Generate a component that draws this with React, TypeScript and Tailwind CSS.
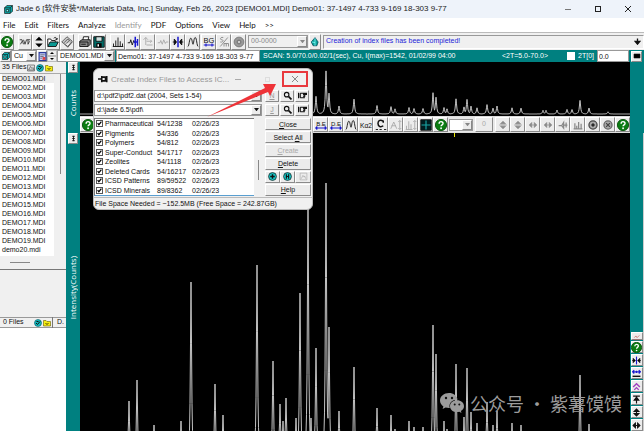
import type { ReactNode } from "react";
import { clsx } from "clsx";

const files = [
  ...Array.from({ length: 19 }, (_, i) => `DEMO${String(i + 1).padStart(2, "0")}.MDI`),
  "demo20.mdi",
  "DEMO20.MDI",
];

const menus = ["File", "Edit", "Filters", "Analyze", "Identify", "PDF", "Options", "View", "Help", ">>"];

const subfiles = [
  ["Pharmaceutical", "54/1238"],
  ["Pigments", "54/336"],
  ["Polymers", "54/812"],
  ["Super-Conduct", "54/1717"],
  ["Zeolites", "54/1118"],
  ["Deleted Cards", "54/16217"],
  ["ICSD Patterns", "89/59522"],
  ["ICSD Minerals", "89/8362"],
];

// [position, height] of each reflection
const peaks = [
  [49, 62], [57, 83], [74, 38], [101, 42], [111, 181], [135, 79], [143, 48], [177, 198],
  [193, 102], [200, 59], [203, 42], [206, 65], [216, 45], [220, 170], [228, 270], [231, 45],
  [236, 115], [246, 280], [249, 136], [259, 52], [274, 96], [297, 55], [311, 48], [315, 34],
  [329, 42], [334, 36], [343, 36], [353, 138], [356, 109], [364, 42], [367, 34], [376, 99],
  [384, 46], [387, 95], [391, 51], [397, 40], [407, 61], [413, 38], [417, 52], [432, 40],
  [441, 38], [463, 24], [466, 24], [477, 25], [487, 30], [492, 29], [500, 88], [509, 39], [528, 14],
];

function trace(height: number, base: number, scale: number) {
  const points: string[] = [];
  for (let x = 0; x <= 550; x += 0.5) {
    const h = Math.max(...peaks.map(([px, ph]) => ph / (1 + ((x - px) / 0.7) ** 2)));
    points.push(`${x},${Math.min(height + 5, base - h * scale).toFixed(1)}`);
  }
  return points.join(" ");
}

const glyphs: Record<string, ReactNode> = {
  help: (
    <>
      <circle cx="8" cy="8" r="7.5" fill="#0b7d12" stroke="#065009" />
      <path d="M5.5 6.2c0-3.6 5.2-3.4 5.2-.3 0 1.900-2.600 1.900-2.600 3.800" stroke="#fff" strokeWidth="1.900" />
      <circle cx="8.100" cy="12.300" r="1.200" fill="#fff" stroke="none" />
    </>
  ),
  settings: <path d="M1 5h3l2 6M2 11l2-4M6 5l2 6 2-6M10 5h5M12 5v6M14 7l-2 4" stroke="#333" />,
  updown: <path d="M8 1l5 5H3zM8 15l5-5H3z" fill="#000" stroke="none" />,
  open: (
    <>
      <path d="M1 13V4h4l1 2h5v2" fill="#fff" />
      <path d="M1 14l3-6h11l-3 6z" fill="#0a9a94" />
      <path d="M9 3c2-2 4-1 4 2m-2-1l2 1 1-2" />
    </>
  ),
  paper: <path d="M1 8l7-7 7 6-6 7zM4 9l5-5 3 3M5 11l4 4 6-7M7 10l4-4" fill="#ccc" stroke="#555" />,
  print: (
    <>
      <path d="M5 6l1-5h7l-1 5" fill="#fff" />
      <path d="M1 7l3-2h11v6l-3 3H1z" fill="#888" />
      <path d="M1 8h11v6M3 11h6" />
    </>
  ),
  save: (
    <>
      <path d="M1 1h14v14H1z" fill="#006b66" />
      <path d="M4 1h8v6H4z" fill="#cfe0df" />
      <path d="M5 10h6v5H5z" fill="#000" />
      <path d="M6 11h2v3H6z" fill="#fff" stroke="none" />
    </>
  ),
  bars: <path d="M1 14h14M2 14v-4M5 14V6M8 14V2M11 14V7M14 14v-4" />,
  cut: (
    <>
      <path d="M1 9h3l1-4 2 7 2-6 1 3" />
      <path d="M11 1v14M14 4v9M9 8h6" stroke="#1818d0" strokeWidth="2" />
    </>
  ),
  shift: <path d="M5 2v10M2 5l3-3 3 3M6 7h7M11 5l2 2-2 2M6 12h8" stroke="#aaa" />,
  wave: <path d="M1 9h3l1-3 2 5 2-6 2 5 1-2h3" stroke="#aaa" />,
  split: (
    <>
      <path d="M8 1v14" stroke="#1818d0" strokeWidth="2" />
      <path d="M1 8h3M15 8h-3M3 4v8l3-4zM13 4v8l-3-4z" fill="#000" />
    </>
  ),
  peaks: <path d="M1 14c2 0 2-11 4-11s2 8 3 8 1-9 3-9 2 12 4 12" />,
  background: (
    <>
      <text x="8" y="9" fontSize="10" textAnchor="middle" fill="#111" stroke="none">BG</text>
      <path d="M1 12h14M4 10v4M12 10v4" stroke="#1818d0" strokeWidth="1.500" />
    </>
  ),
  be: (
    <>
      <text x="8" y="9" fontSize="8" textAnchor="middle" fill="#111" stroke="none">B.E</text>
      <path d="M1 12h14M3 10l-2 2 2 2M13 10l2 2-2 2" stroke="#1818d0" strokeWidth="1.500" />
    </>
  ),
  de: (
    <>
      <text x="8" y="9" fontSize="8" textAnchor="middle" fill="#111" stroke="none">D.E</text>
      <path d="M1 12h14M3 10l-2 2 2 2M13 10l2 2-2 2" stroke="#1818d0" strokeWidth="1.500" />
    </>
  ),
  ka: <text x="8" y="12" fontSize="9" textAnchor="middle" fill="#111" stroke="none">Kα2</text>,
  sm: <path d="M7 2C3 1 2 5 5 5s2 4-2 3M13 2L3 14M8 14v-4h6v4M11 10v4" stroke="#888" />,
  disc: (
    <>
      <circle cx="8" cy="8" r="6.500" fill="#999" stroke="#777" />
      <circle cx="8" cy="8" r="2.500" fill="#ccc" stroke="#666" />
    </>
  ),
  gem: (
    <>
      <path d="M8 1l5 7-2 6H5L2 8z" fill="#0aa39a" stroke="#045" />
      <path d="M8 2v12M3 8l5 1" stroke="#8ff" />
    </>
  ),
  curve: (
    <>
      <path d="M11 3C6 0 4 3 4 6s3 6 7 3M11 2v3" strokeWidth="2" />
      <path d="M1 14h3M6 14h3M12 14h3" />
    </>
  ),
  peakHeight: <path d="M1 13l4-9 4 9M2 9h6M13 2v12M11 4l2-2 2 2M11 12l2 2 2-2" stroke="#aaa" />,
  barHeight: <path d="M1 14h9M2 14V9M5 14V3M8 14V7M13 2v12M11 4l2-2 2 2M11 12l2 2 2-2" stroke="#aaa" />,
  grid: (
    <>
      <path d="M1 1h14v14H1z" fill="#001c20" />
      <path d="M8 2v12M2 8h12" stroke="#19a5a5" strokeWidth="1.500" />
    </>
  ),
  greyVertical: <path d="M8 2l4 4H4zM8 14l4-4H4zM2 8h12" fill="#888" stroke="#888" />,
  greyHorizontal: <path d="M2 8l4-4v8zM14 8l-4-4v8zM6 8h4" fill="#888" stroke="#888" />,
  greyPeak: <path d="M1 9h5l3-5v9L6 9M9 8h6M13 4v8" stroke="#888" strokeWidth="2" />,
  greyBars: <path d="M1 14h14M3 14V5M6 14V9M9 14V3M13 14V6" stroke="#888" strokeWidth="2" />,
  ring: (
    <>
      <circle cx="8" cy="8" r="6.500" fill="#aaa" stroke="#444" strokeWidth="2" />
      <circle cx="8" cy="8" r="2" fill="#444" />
    </>
  ),
  cross: (
    <>
      <circle cx="8" cy="8" r="6.500" fill="#aaa" stroke="#666" strokeWidth="2" />
      <path d="M5 5l6 6M11 5l-6 6" stroke="#444" strokeWidth="2" />
    </>
  ),
  cube: (
    <>
      <path d="M1 5l4-4h10v10l-4 4H1z" fill="#0aaeb0" />
      <path d="M1 5h10v10M11 5l4-4" />
      <path d="M4 8h4v4H4z" fill="#8ff" />
    </>
  ),
  folder: <path d="M1 14V3h5l2 2h7v9zM4 9h8M6 11h4" fill="#f5ec12" stroke="#665f00" />,
  teal: (
    <>
      <circle cx="8" cy="8" r="7" fill="#12b9bd" stroke="#056" />
      <path d="M4 8l3 3 5-6M5 5h4" strokeWidth="2" />
    </>
  ),
  image: <path d="M1 2h14v12H1zM3 12l4-7 3 4 2-2 2 5z" fill="#ddd" stroke="#444" />,
  page: (
    <>
      <path d="M2 1h12v14H2z" fill="#c9d2ff" stroke="#2c3c9c" strokeWidth="2" />
      <path d="M4 5h8M4 8h6M4 11h3" stroke="#444" />
      <path d="M8 9h5v5H8z" fill="#d44" stroke="none" />
    </>
  ),
  pin: <path d="M0 8h6M6 3v10M6 5h6v6H6M14 3v10" strokeWidth="2.500" />,
  search: (
    <>
      <circle cx="6.500" cy="6.500" r="4" strokeWidth="2" />
      <path d="M10 10l5 5" strokeWidth="3" />
    </>
  ),
  hand: <path d="M1 3v10M4 4v8M4 4h11v2H9h3v3H9h2v3H4" strokeWidth="2" />,
  plus: (
    <>
      <circle cx="8" cy="8" r="7" fill="#17c4c4" />
      <path d="M8 4v8M4 8h8" strokeWidth="2.500" />
    </>
  ),
  hex: (
    <>
      <circle cx="8" cy="8" r="7" fill="#17c4c4" />
      <path d="M6 4v8M10 4v8M5 8h6" strokeWidth="2" />
    </>
  ),
  imageOff: <path d="M2 2h12v12H2zM4 12l3-6 2 3 1-2 2 5" stroke="#aaa" />,
  arrowDown: <path d="M8 1v9M3 8l5 6 5-6z" fill="#000" strokeWidth="3" />,
  squeeze: (
    <>
      <path d="M8 1v14" stroke="#1818d0" strokeWidth="2" />
      <path d="M0 8h3M16 8h-3M2 4v8l4-4zM14 4v8l-4-4z" fill="#000" />
    </>
  ),
  extent: (
    <>
      <path d="M1 5h14M4 2L1 5l3 3M12 2l3 3-3 3M8 3v4" stroke="#1818d0" strokeWidth="2" />
      <path d="M1 13h14" strokeWidth="2.500" />
    </>
  ),
  chevrons: <path d="M2 9l6-6 6 6M4 14l4-4 4 4" stroke="#a040c0" strokeWidth="2.500" />,
  top: <path d="M2 2h12M8 15V7M4 9l4-5 4 5z" fill="#000" strokeWidth="2" />,
  vertical: <path d="M8 3v10M4 6l4-4 4 4zM4 10l4 4 4-4z" fill="#000" strokeWidth="2" />,
  horizontal: <path d="M3 8h10M6 4L2 8l4 4zM10 4l4 4-4 4z" fill="#000" strokeWidth="2" />,
  scan: <path d="M2 14h12M4 10l3-3 2 3 4-4" stroke="#b55" />,
  dots: <path d="M8 2v12M5 3h6M5 8h6M5 13h6" strokeWidth="2" />,
  screen: <path d="M2 4h12v8H2z" fill="#000" />,
};

function Glyph({ name, className = "size-3" }: { name: string; className?: string }) {
  return (
    <svg viewBox="0 0 16 16" fill="none" stroke="#111" strokeWidth="1.200" className={clsx("shrink-0", className)}>
      {glyphs[name]}
    </svg>
  );
}

const bevel =
  "flex items-center justify-center shrink-0 border border-t-white border-l-white border-r-[#8a8a8a] border-b-[#8a8a8a] bg-[#ececec]";

function IconButton({ name, className, icon }: { name: string; className: string; icon?: string }) {
  return (
    <button aria-label={name} className={clsx(bevel, className)}>
      <Glyph name={name} className={icon} />
    </button>
  );
}

function Combo({ label, value, className, muted }: { label: string; value: string; className: string; muted?: boolean }) {
  return (
    <div className={clsx("flex shrink-0 border border-[#999]", muted ? "bg-[#f0f0f0] text-[#888]" : "bg-white", className)}>
      <select aria-label={label} className="min-w-0 flex-1 appearance-none bg-transparent pl-[2px] outline-none">
        <option>{value}</option>
      </select>
      <span className="flex w-[10px] items-center justify-center border border-t-white border-l-white border-r-[#888] border-b-[#888] bg-[#ececec]">
        <svg viewBox="0 0 6 4" className="w-[5px]" fill="currentColor">
          <path d="M0 0h6L3 4z" />
        </svg>
      </span>
    </div>
  );
}

function TitleBar() {
  return (
    <header className="flex h-[18px] shrink-0 items-center bg-[#eef3fa] pr-[13px] pl-1 font-['Liberation_Sans','Noto_Sans_CJK_SC',sans-serif]">
      <Glyph name="cube" className="size-[9px]" />
      <h1 className="ml-[3px] flex-1 truncate text-[8px] leading-[14px] text-[#222]">
        Jade 6 [软件安装*/Materials Data, Inc.] Sunday, Feb 26, 2023 [DEMO01.MDI] Demo01: 37-1497 4-733 9-169 18-303 9-77
      </h1>
      <div className="flex items-center gap-6">
        <button aria-label="Minimize" className="h-px w-[6px] bg-[#777]" />
        <button aria-label="Maximize" className="size-[6px] border border-[#222]" />
        <button aria-label="Close">
          <svg viewBox="0 0 6 6" className="size-[6px]" stroke="#222">
            <path d="M0 0l6 6M6 0L0 6" />
          </svg>
        </button>
      </div>
    </header>
  );
}

function Toolbar() {
  return (
    <div className="flex h-[18px] shrink-0 items-center border-t border-[#bbb] bg-[#f0f0f0]">
      <IconButton name="help" className="h-4 w-[14px]" />
      <div className="ml-1 flex">
        {["settings", "updown", "open", "paper"].map((n) => (
          <IconButton key={n} name={n} className="h-4 w-[14px]" />
        ))}
      </div>
      <div className="ml-1 flex">
        {["print", "save"].map((n) => (
          <IconButton key={n} name={n} className="h-4 w-[14px]" />
        ))}
      </div>
      <div className="ml-1 flex">
        {["bars", "cut", "shift", "wave", "split", "peaks"].map((n) => (
          <IconButton key={n} name={n} className="h-4 w-[15px]" />
        ))}
      </div>
      <div className="ml-[1px] flex">
        {["background", "sm", "disc"].map((n) => (
          <IconButton key={n} name={n} className="h-4 w-[15px]" />
        ))}
      </div>
      <Combo label="Card number" value="00-0000" className="ml-[2px] h-[13px] w-[60px]" muted />
      <IconButton name="gem" className="ml-px h-4 w-[12px]" icon="size-[10px]" />
      <div className="ml-[2px] flex h-[14px] min-w-0 flex-1 items-center border border-t-[#999] border-l-[#999] border-r-white border-b-white px-[2px]">
        <output className="flex-1 whitespace-nowrap text-[#1d1dd8]">Creation of index files has been completed!</output>
        <Glyph name="arrowDown" className="size-[7px]" />
      </div>
    </div>
  );
}

function ScanBar() {
  return (
    <div className="flex h-3 shrink-0 items-center bg-[#008080]">
      <IconButton name="cube" className="h-3 w-[11px]" icon="size-2" />
      <Combo label="Anode" value="Cu" className="h-3 w-[26px]" />
      <IconButton name="page" className="h-3 w-[10px]" icon="size-[9px]" />
      <div className="flex h-3 w-[10px] flex-col">
        <button aria-label="Next" className="flex flex-1 items-center justify-center border border-[#bbb] bg-[#eee]">
          <svg viewBox="0 0 6 3" className="w-1"><path d="M0 3l3-3 3 3z" /></svg>
        </button>
        <button aria-label="Previous" className="flex flex-1 items-center justify-center border border-[#bbb] bg-[#eee]">
          <svg viewBox="0 0 6 3" className="w-1"><path d="M0 0l3 3 3-3z" /></svg>
        </button>
      </div>
      <Combo label="Pattern" value="DEMO01.MDI" className="h-3 w-[58px]" />
      <input
        aria-label="Title"
        defaultValue="Demo01: 37-1497 4-733 9-169 18-303 9-77"
        className="ml-px h-3 w-[144px] shrink-0 border border-[#999] bg-white px-px"
      />
      <span className="ml-[3px] whitespace-nowrap text-white">SCAN: 5.0/70.0/0.02/1(sec), Cu, I(max)=1542, 01/02/99 04:00</span>
      <span className="ml-auto whitespace-nowrap text-white">&lt;2T=5.0-70.0&gt;</span>
      <label className="ml-[19px] flex items-center gap-[3px] text-white">
        <input type="checkbox" className="size-2 appearance-none bg-white" />
        2T[0]
      </label>
      <input aria-label="Offset" defaultValue="0.0" className="ml-[3px] h-3 w-8 shrink-0 border border-[#999] bg-white px-px" />
      <IconButton name="screen" className="mx-[2px] h-[11px] w-[11px]" icon="size-2" />
    </div>
  );
}

function FilePanel() {
  return (
    <aside className="flex w-[66px] shrink-0 flex-col bg-[#f0f0f0]">
      <div className="flex h-3 shrink-0 items-center gap-px border-b border-[#aaa] pl-[2px]">
        <span className="w-6 whitespace-nowrap">35 Files</span>
        <Glyph name="image" className="size-2" />
        <Glyph name="teal" className="size-2" />
        <Glyph name="folder" className="size-2" />
      </div>
      <div className="flex h-[182px] shrink-0">
        <ul className="w-[54px] overflow-hidden bg-white pl-[2px] leading-[9px]">
          {files.map((f, i) => (
            <li key={i} className={clsx("whitespace-nowrap", i === 0 && "bg-[#eee]")}>{f}</li>
          ))}
        </ul>
        <div className="flex flex-1 justify-center">
          <div className="h-[100px] w-px bg-[#888]" />
        </div>
      </div>
      <div className="flex h-[14px] shrink-0 items-center border-b border-[#777] pl-[10px]">
        <div className="h-px w-5 bg-[#888]" />
      </div>
      <div className="h-[47px] shrink-0" />
      <div className="flex h-[11px] shrink-0 items-center border-y border-[#999]">
        <span className="w-8 pl-[3px] whitespace-nowrap">0 Files</span>
        <Glyph name="teal" className="ml-[2px] size-2" />
        <Glyph name="folder" className="ml-px size-2" />
        <span className="ml-[1px] border-l border-[#777] pl-1 whitespace-nowrap">D.</span>
      </div>
      <div className="flex-1 bg-white" />
    </aside>
  );
}

function AxisLabel({ text }: { text: string }) {
  return (
    <div className="flex w-[14px] flex-col items-center bg-[#008080]">
      <IconButton name="dots" className="h-[11px] w-[10px]" icon="size-[7px]" />
      <div className="flex flex-1 items-center">
        <span className="rotate-180 font-['Open_Sans',sans-serif] text-[8px] leading-3 text-white [writing-mode:vertical-rl]">
          {text}
        </span>
      </div>
    </div>
  );
}

function PatternToolbar() {
  return (
    <div className="flex h-[17px] shrink-0 items-center border-y border-[#ddd] bg-[#e8e8e8]">
      <IconButton name="help" className="h-[15px] w-[15px]" />
      <div className="ml-auto flex">
        {["be", "de", "peaks", "ka", "curve", "peakHeight", "barHeight", "grid", "help"].map((n) => (
          <IconButton key={n} name={n} className="h-[15px] w-[15px]" />
        ))}
      </div>
      <Combo label="Window" value="" className="ml-px h-3 w-6 text-[#888]" />
      <button className={clsx(bevel, "mx-[2px] h-[15px] w-[18px] text-[#aaa]")}>0</button>
      {["greyVertical", "greyVertical", "greyHorizontal", "greyHorizontal", "greyPeak", "greyBars", "ring", "cross", "help"].map((n, i) => (
        <IconButton key={i} name={n} className="h-[15px] w-[15px]" icon={n === "help" ? "size-3" : "size-[10px]"} />
      ))}
    </div>
  );
}

function Plot({ height, base, scale }: { height: number; base: number; scale: number }) {
  return (
    <svg viewBox={`0 0 550 ${height}`} preserveAspectRatio="none" className="block h-full w-full bg-black">
      <polyline points={trace(height, base, scale)} fill="none" stroke="#c4c4c4" vectorEffect="non-scaling-stroke" />
    </svg>
  );
}

function Watermark() {
  return (
    <div className="absolute right-2 bottom-[17px] flex items-center gap-[6px] text-[#9c9c9c]">
      <svg viewBox="0 0 24 20" className="w-6" fill="currentColor">
        <path d="M9 0C4 0 0 3.300 0 7.500c0 2.400 1.300 4.500 3.400 5.900L2.600 16l3-1.500c1 .3 2.200.5 3.400.5h.8C8.400 10.500 12 6.500 17.600 6.500 16.800 2.700 13.300 0 9 0z" />
        <path d="M17 7.300c-4 0-7 2.600-7 5.900s3 5.900 7 5.900c.8 0 1.600-.1 2.300-.3L21.500 20l-.6-2c1.900-1.100 3.100-2.800 3.100-4.800 0-3.300-3-5.900-7-5.900z" />
        <g fill="#111">
          <circle cx="6" cy="5" r="1.200" />
          <circle cx="12" cy="5" r="1.200" />
          <circle cx="14.700" cy="11.500" r="1" />
          <circle cx="19.300" cy="11.500" r="1" />
        </g>
      </svg>
      <span className="font-['Noto_Sans_CJK_SC',sans-serif] text-[18px] leading-[22px] whitespace-pre">公众号 · 紫薯馍馍</span>
    </div>
  );
}

function IndexDialog() {
  return (
    <section
      role="dialog"
      aria-label="Create Index Files"
      className="absolute top-[68px] left-[93px] flex w-[220px] flex-col rounded-md border border-[#bbb] bg-[#f0f0f0] leading-[9px]"
    >
      <div className="flex h-5 items-center pr-1 pl-1">
        <Glyph name="pin" className="size-[10px]" />
        <h2 className="ml-[3px] flex-1 text-[8px] whitespace-nowrap text-[#999]">Create Index Files to Access IC...</h2>
        <button aria-label="Minimize" className="mr-6 h-px w-[6px] bg-[#aaa]" />
        <span className="mr-3 size-[5px] border border-[#ddd]" />
        <button aria-label="Close" className="flex h-4 w-[26px] items-center justify-center border-2 border-[#e8383d]">
          <svg viewBox="0 0 6 6" className="size-[6px]" stroke="#888">
            <path d="M0 0l6 6M6 0L0 6" />
          </svg>
        </button>
      </div>
      <div className="flex flex-col gap-px">
        {[
          ["N", "d:\\pdf2\\pdf2.dat (2004, Sets 1-54)"],
          ["J", "d:\\jade 6.5\\pdf\\"],
        ].map(([key, path]) => (
          <div key={key} className="flex h-[13px] items-center">
            <Combo label={`Path ${key}`} value={path} className="h-3 w-[168px]" />
            <div className="ml-[3px] flex gap-px">
              <button className={clsx(bevel, "h-3 w-[14px] text-[#999] underline")}>{key}</button>
              <IconButton name="search" className="h-3 w-[14px]" icon="size-[9px]" />
              <IconButton name="hand" className="h-3 w-[14px]" icon="size-[9px]" />
            </div>
          </div>
        ))}
      </div>
      <div className="mt-[2px] flex h-[78px]">
        <div className="grid w-[160px] grid-rows-8 border-t border-l border-[#777] border-b border-b-[#5a9fd0] bg-white pl-px">
          {subfiles.map(([name, count]) => (
            <label key={name} className="flex items-center whitespace-nowrap">
              <input type="checkbox" defaultChecked className="peer sr-only" />
              <svg viewBox="0 0 8 8" className="size-[7px] border border-[#555]" fill="none" stroke="#000" strokeWidth="2">
                <path d="M1 3.500L3 6l4-5" />
              </svg>
              <span className="ml-[2px] w-[52px]">{name}</span>
              <span className="w-[35px]">{count}</span>
              <span>02/26/23</span>
            </label>
          ))}
        </div>
        <div className="flex w-2 items-end justify-center pb-4">
          <div className="h-5 w-px bg-[#888]" />
        </div>
        <div className="ml-[3px] grid w-[46px] grid-rows-6 gap-px">
          <button className={bevel}><u>C</u>lose</button>
          <button className={bevel}>Select&nbsp;<u>A</u>ll</button>
          <button disabled className={clsx(bevel, "text-[#aaa]")}><u>C</u>reate</button>
          <button className={bevel}><u>D</u>elete</button>
          <div className="flex">
            <IconButton name="plus" className="w-[15px]" icon="size-[9px]" />
            <IconButton name="hex" className="w-[15px]" icon="size-[9px]" />
            <IconButton name="imageOff" className="w-4" icon="size-[9px]" />
          </div>
          <button className={bevel}><u>H</u>elp</button>
        </div>
      </div>
      <p className="mt-px flex h-3 items-center border-t border-[#bbb] pl-[1px] whitespace-nowrap">
        File Space Needed = ~152.5MB (Free Space = 242.87GB)
      </p>
    </section>
  );
}

export default function App() {
  return (
    <div className="relative flex h-screen flex-col overflow-hidden bg-[#f0f0f0] font-['Liberation_Sans',sans-serif] text-[7px] text-[#111]">
      <TitleBar />
      <nav className="flex h-[14px] shrink-0 items-center gap-[9px] bg-white pl-[3px] font-[Lato,sans-serif] text-[8px] leading-3">
        {menus.map((m) => (
          <button key={m} className={m === "Identify" ? "text-[#999]" : "text-[#111]"}>{m}</button>
        ))}
      </nav>
      <Toolbar />
      <ScanBar />
      <main className="flex min-h-0 flex-1">
        <FilePanel />
        <div className="grid min-w-0 flex-1 grid-cols-[14px_minmax(0,1fr)_14px] grid-rows-[71px_minmax(0,1fr)]">
          <AxisLabel text="Counts" />
          <div className="flex min-h-0 flex-col">
            <div className="min-h-0 flex-1">
              <Plot height={54} base={52} scale={0.154} />
            </div>
            <PatternToolbar />
          </div>
          <div className="bg-[#008080]" />
          <AxisLabel text="Intensity(Counts)" />
          <div className="relative min-h-0 bg-black">
            <Plot height={298} base={330} scale={1} />
            <div className="absolute top-0 left-[68%] h-1 w-px bg-[#e5e500]" />
            <Watermark />
          </div>
          <div className="flex flex-col items-center justify-end gap-px overflow-hidden border-r border-[#ccc] bg-[#008080]">
            {["scan", "help", "squeeze", "extent", "chevrons", "top", "vertical", "horizontal"].map((n) => (
              <IconButton
                key={n}
                name={n}
                className={n === "scan" ? "h-2 w-3" : "h-3 w-3"}
                icon={n === "help" ? "size-[11px]" : "size-[9px]"}
              />
            ))}
          </div>
        </div>
      </main>
      <IndexDialog />
      <svg viewBox="0 0 72 36" className="absolute top-[82px] left-[206px] w-[72px]" fill="#ee3338">
        <path d="M1 35L59 6l-2-4 13 0-6 12-2-4z" />
      </svg>
    </div>
  );
}
